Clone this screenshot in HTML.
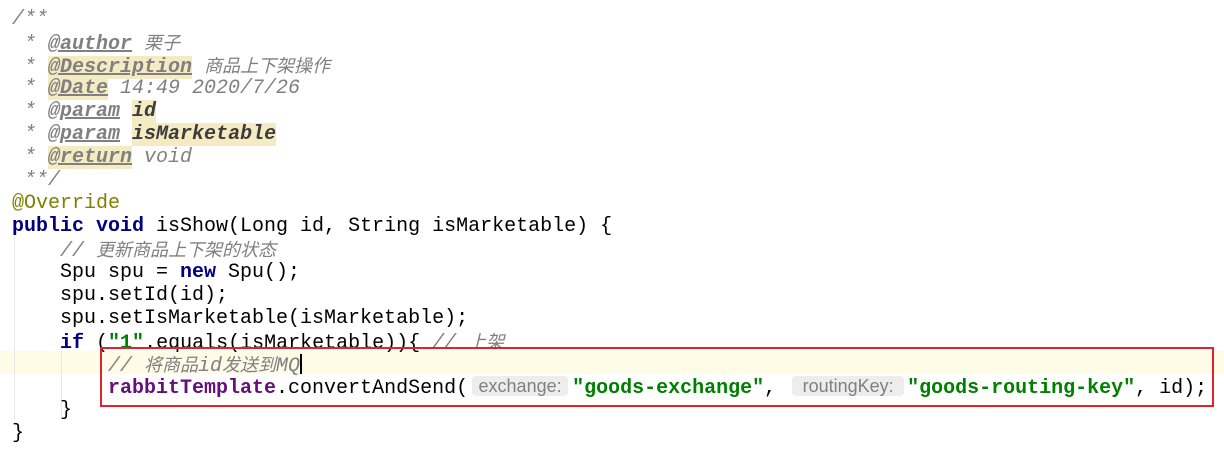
<!DOCTYPE html>
<html><head><meta charset="utf-8"><style>
body{margin:0;width:1224px;height:449px;background:#fff;position:relative;overflow:hidden}
.code{position:absolute;left:12px;top:8px;font-family:"Liberation Mono","Noto Sans CJK SC",monospace;font-size:20px;line-height:23px;color:#000}
.l{height:23px;white-space:pre}
.c{color:#808080;font-style:italic}
.cj{font-family:"Noto Sans CJK SC",sans-serif;font-size:18px}
.tag{color:#808080;font-weight:bold;text-decoration:underline;text-decoration-color:#808080}
.hl{background:#f5ebc3}
.p{color:#3d3d3d;font-weight:bold;font-style:italic}
.kw{color:#000080;font-weight:bold}
.an{color:#808000}
.s{color:#008000;font-weight:bold}
.f{color:#660e7a;font-weight:bold}
.inl{display:inline-block;background:#ededed;color:#808080;font-family:"Liberation Sans",sans-serif;font-size:18px;line-height:20px;border-radius:4px;text-align:center;vertical-align:1px;font-style:normal;font-weight:normal}
.cur{position:absolute;left:0;top:351px;width:1224px;height:23px;background:#fefbe6}
.guide{position:absolute;width:1px;background:#e8e8e8}
.box{position:absolute;left:100px;top:347px;width:1110px;height:56px;border:2px solid #e3232c}
</style></head><body>
<div class="cur"></div>
<div class="guide" style="left:14px;top:236px;height:184px"></div>
<div class="guide" style="left:61px;top:351px;height:66px"></div>
<div class="code"><div class="l c">/**</div><div class="l c"> * <span class="tag">@author</span> <span class="cj">栗子</span></div><div class="l c"> * <span class="tag hl">@Description</span> <span class="cj">商品上下架操作</span></div><div class="l c"> * <span class="tag hl">@Date</span> 14:49 2020/7/26</div><div class="l c"> * <span class="tag">@param</span> <span class="p hl">id</span></div><div class="l c"> * <span class="tag">@param</span> <span class="p hl">isMarketable</span></div><div class="l c"> * <span class="tag hl">@return</span> void</div><div class="l c"> **/</div><div class="l an">@Override</div><div class="l"><span class="kw">public void</span> isShow(Long id, String isMarketable) {</div><div class="l">    <span class="c">// <span class="cj">更新商品上下架的状态</span></span></div><div class="l">    Spu spu = <span class="kw">new</span> Spu();</div><div class="l">    spu.setId(id);</div><div class="l">    spu.setIsMarketable(isMarketable);</div><div class="l">    <span class="kw">if</span> (<span class="s">"1"</span>.equals(isMarketable)){ <span class="c">// <span class="cj">上架</span></span></div><div class="l">        <span class="c">// <span class="cj">将商品</span>id<span class="cj">发送到</span>MQ</span><span style="display:inline-block;width:2px;height:20px;background:#000;vertical-align:-3px"></span></div><div class="l">        <span class="f">rabbitTemplate</span>.convertAndSend(<span class="inl" style="width:96px;margin:0 4px 0 4px">exchange:</span><span class="s">"goods-exchange"</span>, <span class="inl" style="width:112px;margin:0 3px 0 4px">routingKey:</span><span class="s">"goods-routing-key"</span>, id);</div><div class="l">    }</div><div class="l">}</div></div>
<div class="box"></div>
</body></html>
